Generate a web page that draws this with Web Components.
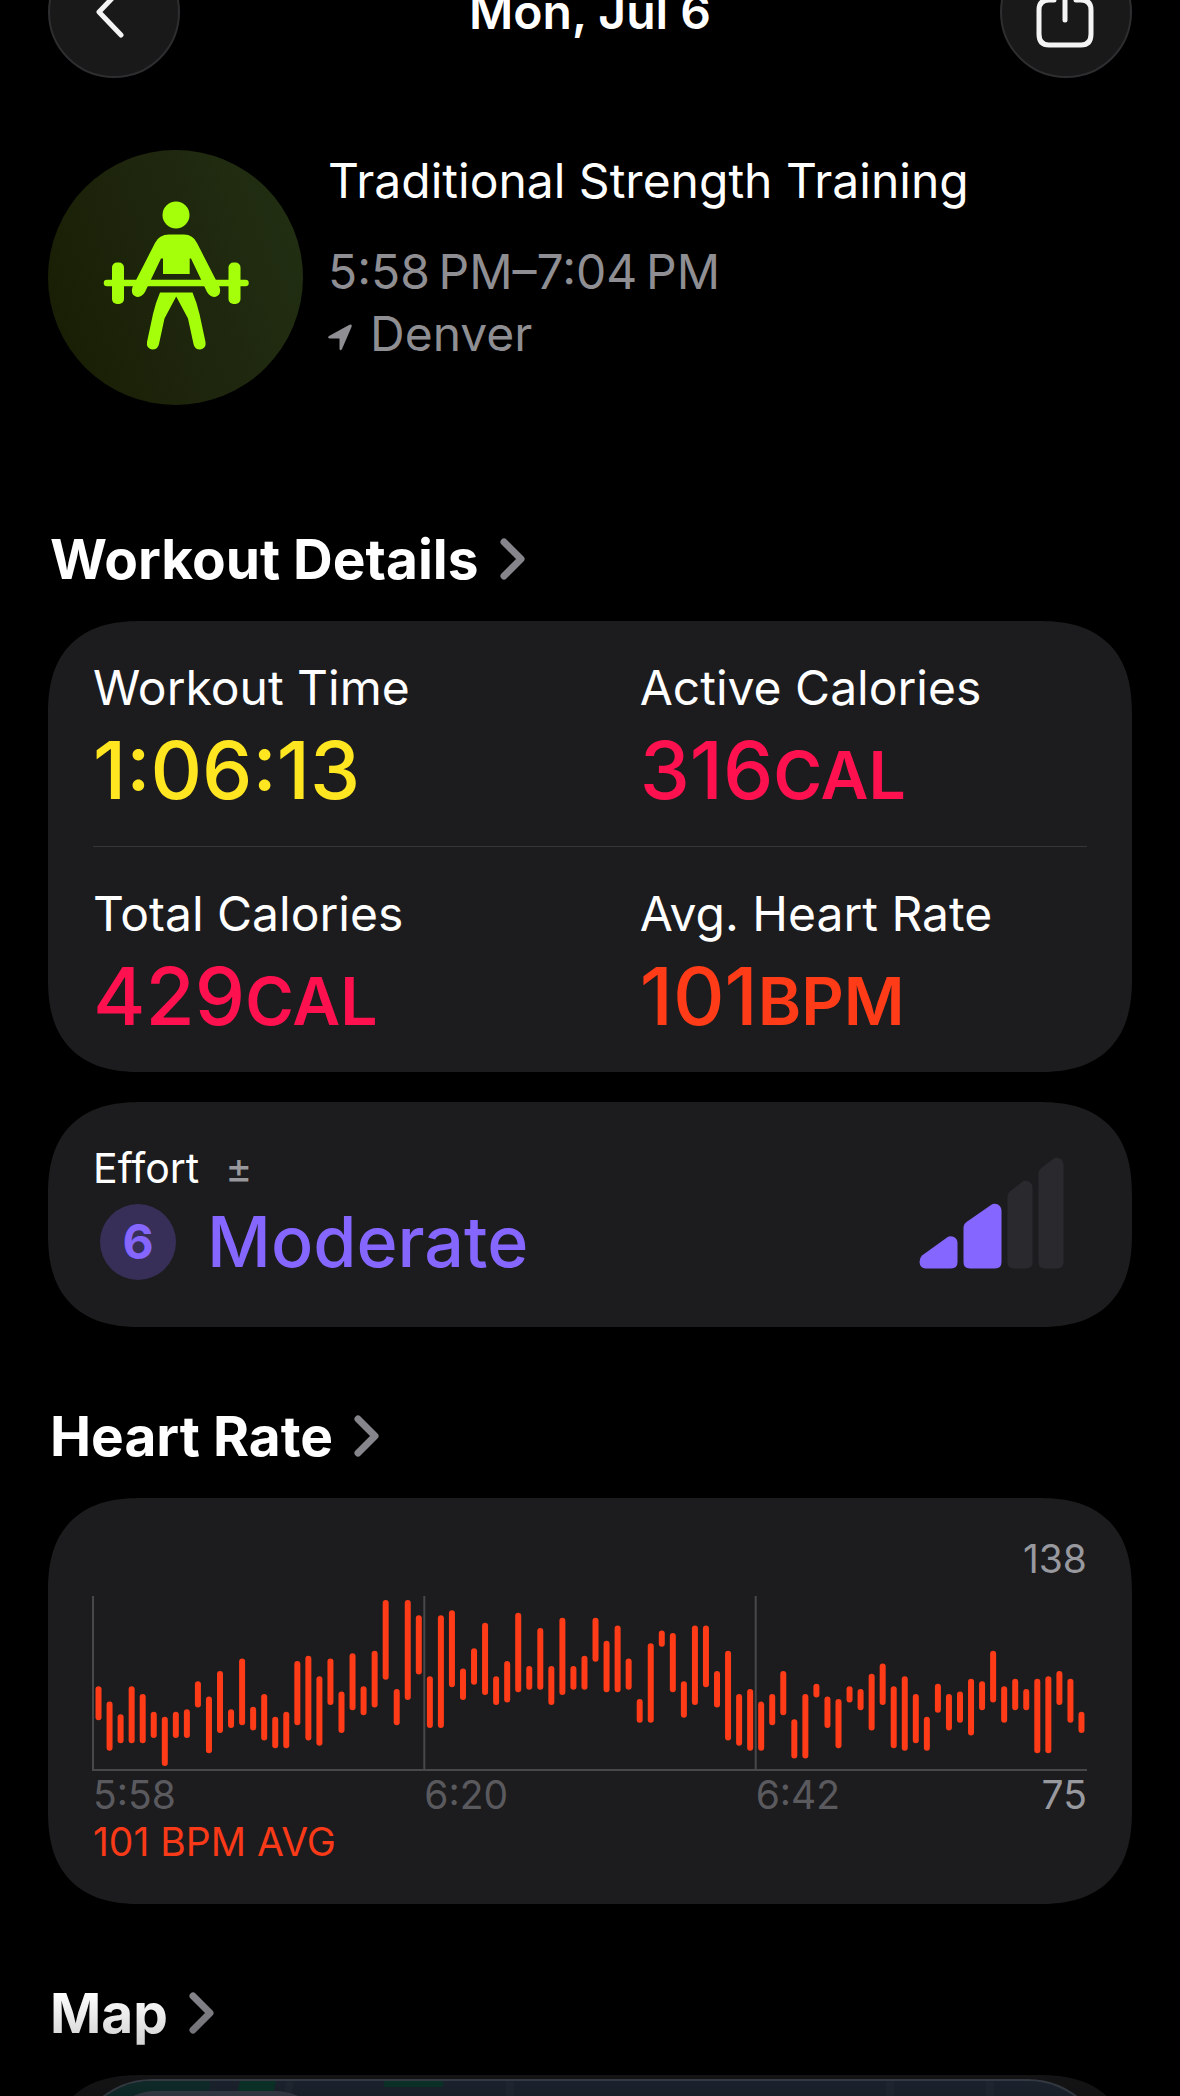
<!DOCTYPE html>
<html lang="en">
<head>
<meta charset="utf-8">
<meta name="viewport" content="width=device-width, initial-scale=1">
<title>Workout</title>
<style>
  body {
    margin: 0;
    background: #000;
    color: #fff;
    font-family: Inter, "Liberation Sans", sans-serif;
  }
</style>
</head>
<body>
<workout-page>
  <nav-header slot="header">Mon, Jul 6</nav-header>

  <workout-summary>
    <span slot="name">Traditional Strength Training</span>
    <span slot="time">5:58&#8201;PM–7:04&#8201;PM</span>
    <span slot="place">Denver</span>
  </workout-summary>

  <section-title href="#details">Workout Details</section-title>
  <metric-grid>
    <metric-tile color="#ffe620" value="1:06:13">Workout Time</metric-tile>
    <metric-tile color="#ff114f" value="316" unit="CAL">Active Calories</metric-tile>
    <metric-tile color="#ff114f" value="429" unit="CAL">Total Calories</metric-tile>
    <metric-tile color="#ff3b18" value="101" unit="BPM">Avg. Heart Rate</metric-tile>
  </metric-grid>
  <effort-card level="6">Moderate</effort-card>

  <section-title href="#heart-rate">Heart Rate</section-title>
  <heart-rate-chart max="138" min="75">101 BPM AVG</heart-rate-chart>

  <section-title href="#map">Map</section-title>
  <map-preview></map-preview>
</workout-page>

<script>
// Surface shared by every card
const cardStyle = `
  :host {
    display: block;
    box-sizing: border-box;
    border-radius: 80px;
    background: #1c1c1e;
  }
  @supports (corner-shape: superellipse(1.3)) {
    :host {
      border-radius: 94px;
      corner-shape: superellipse(1.3);
    }
  }
`;

class WorkoutPage extends HTMLElement {
  constructor() {
    super();
    this.attachShadow({ mode: 'open' });
    this.shadowRoot.innerHTML = `
      <style>
        :host {
          display: block;
          height: 100vh;
          overflow: hidden;
        }
        main {
          display: flex;
          flex-direction: column;
          padding: 0 48px;
        }
        .fade {
          position: fixed;
          inset: auto 0 0 0;
          height: 104px;
          background: linear-gradient(rgba(0, 0, 0, 0), rgba(0, 0, 0, 0.35));
          pointer-events: none;
        }
      </style>
      <main>
        <slot name="header"></slot>
        <slot></slot>
      </main>
      <div class="fade"></div>
    `;
  }
}

class NavHeader extends HTMLElement {
  constructor() {
    super();
    this.attachShadow({ mode: 'open' });
    this.shadowRoot.innerHTML = `
      <style>
        /* Partly scrolled off the top of the screen */
        :host {
          display: flex;
          align-items: center;
          justify-content: space-between;
          margin-top: -54px;
        }
        h1 {
          margin: 0;
          font-size: 48px;
          font-weight: 600;
          line-height: 56px;
        }
        button {
          display: grid;
          place-items: center;
          width: 132px;
          height: 132px;
          padding: 0;
          border: 2px solid #2e2e30;
          border-radius: 50%;
          background: #19191a;
          color: #f4f4f4;
        }
        svg {
          fill: none;
          stroke: currentColor;
          stroke-width: 5;
          stroke-linecap: round;
          stroke-linejoin: round;
        }
      </style>
      <button type="button" aria-label="Back">
        <svg width="60" height="60" viewBox="0 0 60 60"><path d="M37 7 L15 30 L37 53"/></svg>
      </button>
      <h1><slot></slot></h1>
      <button type="button" aria-label="Share">
        <svg width="64" height="80" viewBox="0 0 64 80">
          <path d="M20 28 H15 Q5 28 5 38 V62 Q5 73 15 73 H47 Q57 73 57 62 V38 Q57 28 47 28 H42"/>
          <path d="M31 48 V6 M19 17 L31 5 L43 17"/>
        </svg>
      </button>
    `;
  }
}

class WorkoutSummary extends HTMLElement {
  constructor() {
    super();
    this.attachShadow({ mode: 'open' });
    this.shadowRoot.innerHTML = `
      <style>
        :host {
          display: flex;
          gap: 25px;
          margin-top: 72px;
        }
        .badge {
          flex: none;
          width: 255px;
          height: 255px;
          border-radius: 50%;
          background: linear-gradient(70deg, #171d02, #1e260d 50%, #223013);
        }
        h2, p {
          margin: 0;
          font-size: 48px;
          font-weight: 400;
          line-height: 62px;
        }
        h2 {
          margin-bottom: 29px;
        }
        p {
          color: #8e8e93;
        }
        .place {
          display: flex;
          align-items: center;
          gap: 18px;
        }
      </style>
      <svg class="badge" viewBox="0 0 255 255" aria-hidden="true">
        <g fill="#a5ff0a" stroke="#a5ff0a" stroke-linecap="round" stroke-linejoin="round">
          <circle cx="128" cy="65" r="13.5" stroke="none"/>
          <path d="M115 124 V108.500 H113 L97 142 Q94 147 89 147 Q82 145 84.500 137 L107 93 Q111 84.500 121 84.500 H136 Q145 84.500 149 93 L171.500 137 Q174 145 167 147 Q162 147 159 142 L143 108.500 H141.700 V124 Z" stroke="none"/>
          <path d="M59 133 H197.500" stroke-width="6.500"/>
          <rect x="64" y="112.500" width="12" height="41.500" rx="5" stroke="none"/>
          <rect x="180.500" y="112.500" width="12" height="41.500" rx="5" stroke="none"/>
          <path d="M112 142.500 H144.500 Q149 153 151.500 164 L157.500 192 Q158.500 198 152.500 199.500 Q146.500 199.500 145.500 194 L140 168.500 L128.200 146.500 L116.500 168.500 L111 194 Q110 199.500 104 199.500 Q98 198 99 192 L105 164 Q107.500 153 112 142.500 Z" stroke="none"/>
        </g>
      </svg>
      <div>
        <h2><slot name="name"></slot></h2>
        <p><slot name="time"></slot></p>
        <p class="place">
          <svg width="24" height="33" viewBox="0 -6 24 33" aria-hidden="true">
            <path d="M1 12 L21 1 Q24.500 -0.500 23.500 3 L14 25 Q12.500 27.500 11.500 25 V14.500 H1.500 Q-1 14 1 12 Z" fill="#8e8e93"/>
          </svg>
          <slot name="place"></slot>
        </p>
      </div>
    `;
  }
}

class SectionTitle extends HTMLElement {
  constructor() {
    super();
    this.attachShadow({ mode: 'open' });
    this.shadowRoot.innerHTML = `
      <style>
        :host {
          display: block;
          padding: 76px 2px 29px;
        }
        :host(:first-of-type) {
          padding-top: 121px;
        }
        h2 {
          margin: 0;
          font-size: 55px;
          font-weight: 700;
          line-height: 66px;
        }
        a {
          display: inline-flex;
          align-items: center;
          gap: 20px;
          color: inherit;
          text-decoration: none;
        }
      </style>
      <h2>
        <a>
          <slot></slot>
          <svg width="27" height="42" viewBox="0 0 27 42" aria-hidden="true">
            <path d="M5 4 L22 21 L5 38" fill="none" stroke="#85858b" stroke-width="7" stroke-linecap="round" stroke-linejoin="round"/>
          </svg>
        </a>
      </h2>
    `;
  }

  connectedCallback() {
    this.shadowRoot.querySelector('a').href = this.getAttribute('href');
  }
}

class MetricGrid extends HTMLElement {
  constructor() {
    super();
    this.attachShadow({ mode: 'open' });
    this.shadowRoot.innerHTML = `
      <style>
        ${cardStyle}
        :host {
          padding: 0 45px;
        }
        .grid {
          display: grid;
          grid-template-columns: 11fr 9fr;
        }
        /* Hairline between the rows */
        ::slotted(:nth-child(-n + 2)) {
          border-bottom: 1px solid #363638;
        }
      </style>
      <div class="grid"><slot></slot></div>
    `;
  }
}

class MetricTile extends HTMLElement {
  constructor() {
    super();
    this.attachShadow({ mode: 'open' });
    this.shadowRoot.innerHTML = `
      <style>
        :host {
          display: block;
          padding: 37px 0 24px;
        }
        .label {
          font-size: 48px;
          line-height: 60px;
        }
        .value {
          font-size: 80px;
          font-weight: 500;
          line-height: 104px;
          white-space: nowrap;
        }
        .unit {
          font-size: 66px;
          font-weight: 600;
          line-height: 1;
        }
      </style>
      <div class="label"><slot></slot></div>
      <div class="value"><span class="number"></span><span class="unit"></span></div>
    `;
  }

  connectedCallback() {
    const root = this.shadowRoot;
    root.querySelector('.value').style.color = this.getAttribute('color');
    root.querySelector('.number').textContent = this.getAttribute('value');
    root.querySelector('.unit').textContent = this.getAttribute('unit') || '';
  }
}

class EffortCard extends HTMLElement {
  constructor() {
    super();
    this.attachShadow({ mode: 'open' });
    this.shadowRoot.innerHTML = `
      <style>
        ${cardStyle}
        :host {
          display: flex;
          align-items: center;
          justify-content: space-between;
          margin-top: 30px;
          padding: 37px 68px 40px 45px;
        }
        .label {
          display: flex;
          align-items: center;
          gap: 26px;
          font-size: 41px;
          line-height: 58px;
        }
        .sign {
          color: #98989d;
        }
        .rating {
          display: flex;
          align-items: center;
          gap: 31px;
          color: #8566ff;
          font-size: 70px;
          font-weight: 500;
          line-height: 90px;
        }
        .level {
          width: 76px;
          margin-left: 7px;
          border-radius: 50%;
          background: #372f57;
          font-size: 48px;
          font-weight: 700;
          line-height: 76px;
          text-align: center;
        }
      </style>
      <div>
        <div class="label">Effort <span class="sign">±</span></div>
        <div class="rating"><span class="level"></span><slot></slot></div>
      </div>
      <svg width="145" height="112" viewBox="0 0 145 112" aria-hidden="true">
        <g fill="#8566ff">
          <path d="M3 98.500 L28 80.500 Q31 78.500 35 80 Q38.500 82 38.500 86 V105 Q38.500 111.500 32 111.500 H6.500 Q1 111 0.500 105 Q0.500 101 3 98.500 Z"/>
          <path d="M44.500 71 Q44.500 67 47.500 65 L72 48 Q75 46 79 47.500 Q82.500 49.500 82.500 54 V105 Q82.500 111.500 76 111.500 H51 Q44.500 111.500 44.500 105 Z"/>
        </g>
        <g fill="#2a292e">
          <path d="M88.500 40 Q88.500 36 91.500 34 L103 25 Q106 23 110 24.500 Q113.500 26.500 113.500 31 V105 Q113.500 111.500 107 111.500 H95 Q88.500 111.500 88.500 105 Z"/>
          <path d="M119.500 17 Q119.500 13 122.500 11 L134 2 Q137 0 141 1.500 Q144.500 3.500 144.500 8 V105 Q144.500 111.500 138 111.500 H126 Q119.500 111.500 119.500 105 Z"/>
        </g>
      </svg>
    `;
  }

  connectedCallback() {
    this.shadowRoot.querySelector('.level').textContent = this.getAttribute('level');
  }
}

// [low, high] beats per minute, one pair per sample window
const samples = [
  [93, 104], [81, 98], [84, 93], [84, 104], [84, 101], [86, 94], [75, 92], [86, 94], [86, 95], [98, 106],
  [80, 100], [88, 110], [90, 95], [91, 115], [89, 96], [85, 101], [82, 92], [82, 94], [91, 114], [85, 116],
  [83, 108], [99, 115], [88, 102], [97, 117], [95, 104], [98, 118], [109, 138], [91, 103], [101, 138], [111, 132],
  [90, 108], [90, 132], [106, 134], [101, 111], [107, 119], [103, 129], [99, 108], [100, 114], [104, 133], [105, 112],
  [105, 127], [99, 112], [103, 131], [105, 112], [105, 116], [116, 131], [104, 122], [104, 128], [105, 115], [92, 99],
  [92, 121], [122, 126], [104, 125], [94, 106], [99, 128], [106, 128], [98, 110], [85, 118], [83, 101], [81, 103],
  [81, 98], [91, 101], [95, 110], [78, 91], [78, 101], [102, 105], [90, 100], [82, 99], [100, 104], [97, 103],
  [89, 109], [99, 113], [82, 104], [81, 108], [84, 101], [81, 92], [96, 105], [89, 101], [92, 102], [87, 107],
  [97, 106], [100, 118], [92, 104], [97, 107], [97, 103], [80, 107], [80, 108], [99, 110], [92, 107], [88, 94],
];

class HeartRateChart extends HTMLElement {
  constructor() {
    super();
    this.attachShadow({ mode: 'open' });
    this.shadowRoot.innerHTML = `
      <style>
        ${cardStyle}
        :host {
          padding: 37px 45px 39px;
          font-size: 39px;
          line-height: 48px;
        }
        .max, .min {
          color: #98989f;
        }
        .max {
          margin-bottom: 13px;
          text-align: right;
        }
        svg {
          display: block;
          overflow: visible;
          width: 100%;
          height: 175px;
        }
        .axis {
          stroke: #48484a;
          stroke-width: 2;
        }
        .bar {
          stroke: #ff3b18;
          stroke-width: 6;
          stroke-linecap: round;
        }
        .times {
          display: grid;
          grid-template-columns: repeat(3, 1fr);
          color: #5a5a5e;
        }
        .last {
          display: flex;
          justify-content: space-between;
        }
        .average {
          color: #f93a18;
          line-height: 46px;
        }
      </style>
      <div class="max"></div>
      <svg role="img" aria-label="Heart rate over time"></svg>
      <div class="times">
        <span>5:58</span>
        <span>6:20</span>
        <span class="last">6:42 <span class="min"></span></span>
      </div>
      <div class="average"><slot></slot></div>
    `;
  }

  connectedCallback() {
    const max = Number(this.getAttribute('max'));
    const min = Number(this.getAttribute('min'));
    this.shadowRoot.querySelector('.max').textContent = max;
    this.shadowRoot.querySelector('.min').textContent = min;

    // x is in percent so that the bars spread over any card width
    const line = (name, x1, y1, x2, y2) =>
      `<line class="${name}" x1="${x1}" y1="${y1}" x2="${x2}" y2="${y2}"/>`;
    const toY = (bpm) => 7 + ((max - bpm) / (max - min)) * 160;

    const axes = [
      line('axis', '0', 174, '100%', 174),
      line('axis', '0', 0, '0', 175),
      line('axis', '33.33%', 0, '33.33%', 174),
      line('axis', '66.67%', 0, '66.67%', 174),
    ];
    const bars = samples.map(([low, high], i) => {
      const x = `${((i + 0.5) / samples.length) * 100}%`;
      return line('bar', x, toY(high), x, toY(low));
    });

    this.shadowRoot.querySelector('svg').innerHTML = axes.concat(bars).join('');
  }
}

class MapPreview extends HTMLElement {
  constructor() {
    super();
    this.attachShadow({ mode: 'open' });
    this.shadowRoot.innerHTML = `
      <style>
        ${cardStyle}
        :host {
          padding: 4px 24px 24px;
        }
        .map {
          display: block;
          box-sizing: border-box;
          width: 100%;
          height: 400px;
          border: 2px solid #4a525e;
          border-left-color: #3d6f6a;
          border-radius: 80px;
          background: #26303f;
        }
      </style>
      <svg class="map" viewBox="0 0 1032 396" preserveAspectRatio="xMidYMin slice" aria-hidden="true">
        <path d="M0 0 H136 V8 L60 60 H0 Z" fill="#153c3a"/>
        <path d="M166 0 H202 L190 60 H154 Z" fill="#0f4638"/>
        <path d="M310 0 H369 V6 H310 Z" fill="#0f4638"/>
        <g stroke="#2d3645" stroke-width="8">
          <path d="M216 0 L206 60 M436 0 V60 M816 0 V60 M916 0 V60"/>
        </g>
        <rect x="31" y="10" width="221" height="100" rx="50" fill="#4a5260"/>
      </svg>
    `;
  }
}

customElements.define('workout-page', WorkoutPage);
customElements.define('nav-header', NavHeader);
customElements.define('workout-summary', WorkoutSummary);
customElements.define('section-title', SectionTitle);
customElements.define('metric-grid', MetricGrid);
customElements.define('metric-tile', MetricTile);
customElements.define('effort-card', EffortCard);
customElements.define('heart-rate-chart', HeartRateChart);
customElements.define('map-preview', MapPreview);
</script>
</body>
</html>
